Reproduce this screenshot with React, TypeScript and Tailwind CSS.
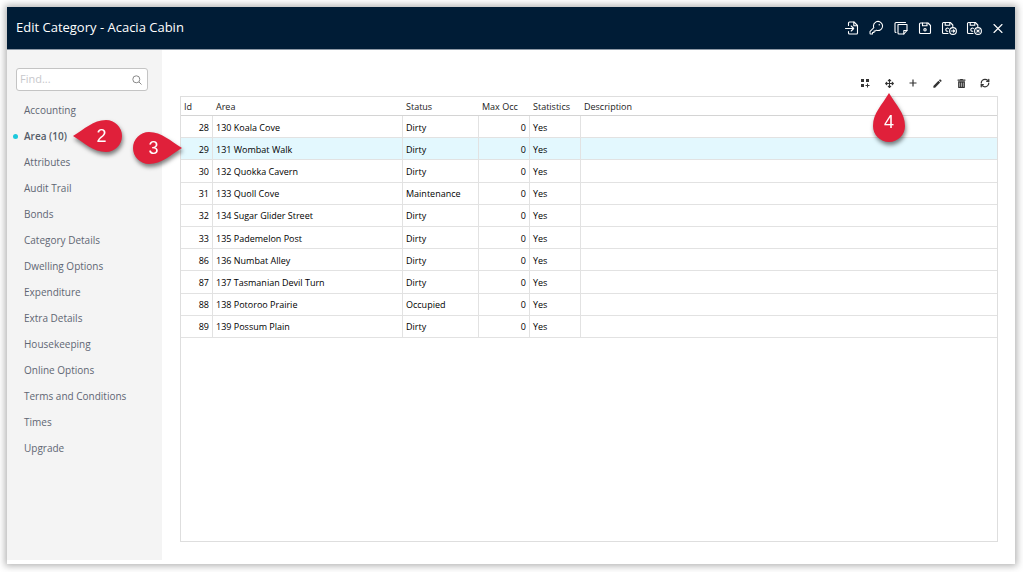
import type { ReactNode } from 'react'
import { FaArrowsAlt, FaTrashAlt } from 'react-icons/fa'
import { LuRefreshCw } from 'react-icons/lu'
import { MdEdit } from 'react-icons/md'
import { PiKey } from 'react-icons/pi'

type Area = {
  id: number
  name: string
  status: string
  maxOcc: number
  statistics: string
  description: string
}

const sections = [
  'Accounting',
  'Area (10)',
  'Attributes',
  'Audit Trail',
  'Bonds',
  'Category Details',
  'Dwelling Options',
  'Expenditure',
  'Extra Details',
  'Housekeeping',
  'Online Options',
  'Terms and Conditions',
  'Times',
  'Upgrade',
]
const activeSection = 'Area (10)'

const area = (id: number, name: string, status = 'Dirty'): Area => ({
  id,
  name,
  status,
  maxOcc: 0,
  statistics: 'Yes',
  description: '',
})

const areas = [
  area(28, '130 Koala Cove'),
  area(29, '131 Wombat Walk'),
  area(30, '132 Quokka Cavern'),
  area(31, '133 Quoll Cove', 'Maintenance'),
  area(32, '134 Sugar Glider Street'),
  area(33, '135 Pademelon Post'),
  area(86, '136 Numbat Alley'),
  area(87, '137 Tasmanian Devil Turn'),
  area(88, '138 Potoroo Prairie', 'Occupied'),
  area(89, '139 Possum Plain'),
]
const selectedId = 29

function Line({ children }: { children: ReactNode }) {
  return (
    <svg
      viewBox="0 0 16 16"
      className="size-4"
      fill="none"
      stroke="currentColor"
      strokeWidth="1.1"
      strokeLinecap="round"
      strokeLinejoin="round"
    >
      {children}
    </svg>
  )
}

const FileInIcon = () => (
  <Line>
    <path d="M4.5 5.5V3a1 1 0 0 1 1-1H10l3.5 3.5V13a1 1 0 0 1-1 1h-7a1 1 0 0 1-1-1v-1.5" />
    <path d="M9.8 2v3.7h3.7M1.5 8.5h8M7.2 6l2.5 2.5L7.2 11" />
  </Line>
)

const CopyIcon = () => (
  <Line>
    <path d="M5 4.500h9v6L10.800 14H6a1 1 0 0 1-1-1z" />
    <path d="M14 10.500h-3.200V14M3 12.500a1 1 0 0 1-1-1V3.500a1 1 0 0 1 1-1h9.500" />
  </Line>
)

const SaveIcon = () => (
  <Line>
    <path d="M3.5 3h7.5l2.5 2.5v7a1 1 0 0 1-1 1h-9a1 1 0 0 1-1-1V4a1 1 0 0 1 1-1z" />
    <path d="M5.5 3v2.8h4.5V3" />
    <circle cx="8" cy="9.8" r="1.2" />
  </Line>
)

const SaveBadge = ({ children }: { children: ReactNode }) => (
  <Line>
    <path d="M7 13.5H2.5a1 1 0 0 1-1-1V3.500a1 1 0 0 1 1-1h6.800l2.500 2.500v1.800" />
    <path d="M4.200 2.500v2.800h4.600V2.500M7.400 8.400a1.600 1.600 0 1 0-.6 2.800" />
    <circle cx="12" cy="11" r="3.400" />
    {children}
  </Line>
)

const headerActions = [
  { label: 'Check in', icon: <FileInIcon /> },
  { label: 'Security', icon: <PiKey className="size-4" /> },
  { label: 'Copy', icon: <CopyIcon /> },
  { label: 'Save', icon: <SaveIcon /> },
  { label: 'Save and next', icon: <SaveBadge><path d="M10.200 11h3.400M12.400 9.800l1.300 1.200-1.300 1.200" /></SaveBadge> },
  { label: 'Save and close', icon: <SaveBadge><path d="m10.800 9.800 2.400 2.400m0-2.400-2.400 2.400" /></SaveBadge> },
  { label: 'Close', icon: <Line><path d="m4 4.500 8 8m0-8-8 8" /></Line> },
]

const toolbarActions = [
  {
    label: 'Add multiple',
    icon: (
      <svg viewBox="0 0 10 10" className="size-[10px]" fill="currentColor">
        <path d="M1 1h3v3H1zM6 1h3v3H6zM1 6h3v3H1zM7 5.500h1V7h1.500v1H8v1.500H7V8H5.500V7H7z" />
      </svg>
    ),
  },
  { label: 'Move', icon: <FaArrowsAlt className="size-[9px]" /> },
  {
    label: 'Add',
    icon: (
      <svg viewBox="0 0 10 10" className="size-[10px]" stroke="currentColor" strokeWidth="1.2">
        <path d="M5 1.500v7M1.500 5h7" />
      </svg>
    ),
  },
  { label: 'Edit', icon: <MdEdit className="size-[11px]" /> },
  { label: 'Delete', icon: <FaTrashAlt className="size-[9px]" /> },
  { label: 'Refresh', icon: <LuRefreshCw className="size-[10px]" strokeWidth={3} /> },
]

const pins = {
  left: {
    box: 'h-8 w-[49px] pl-2',
    view: '0 0 49 32',
    path: 'M0 16C12 9 20 0 33 0a16 16 0 0 1 0 32C20 32 12 23 0 16z',
  },
  right: {
    box: 'h-8 w-[49px] pr-2',
    view: '0 0 49 32',
    path: 'M49 16C37 9 29 0 16 0a16 16 0 0 0 0 32C29 32 37 23 49 16z',
  },
  up: {
    box: 'h-[49px] w-8 pt-2',
    view: '0 0 32 49',
    path: 'M16 0C9 12 0 20 0 33a16 16 0 0 0 32 0C32 20 23 12 16 0z',
  },
}

function Pin({ step, point, className }: { step: number; point: keyof typeof pins; className: string }) {
  const pin = pins[point]
  return (
    <span className={`pointer-events-none absolute z-10 ${className}`}>
      <span
        className={`relative flex items-center justify-center drop-shadow-[1px_3px_2px_rgba(0,0,0,0.5)] ${pin.box}`}
      >
        <svg viewBox={pin.view} className="absolute inset-0 size-full" fill="#e0203a">
          <path d={pin.path} />
        </svg>
        <span className="relative font-['Liberation_Sans',sans-serif] text-lg leading-none font-normal text-white">
          {step}
        </span>
      </span>
    </span>
  )
}

export default function App() {
  return (
    <div className="flex min-h-screen bg-white p-2 pt-[7px] pl-[7px] font-['Open_Sans',sans-serif]">
      <div className="flex flex-1 flex-col bg-white shadow-[0_0_7px_2px_rgba(0,0,0,0.3)]">
        <header className="flex h-[43px] items-center justify-between border-b border-[#8e99a6] bg-[#001c36] pr-[5px] pl-[9px] text-white">
          <h1 className="pb-0.5 text-[13px] leading-5">Edit Category - Acacia Cabin</h1>
          <div className="flex w-[170px] justify-between">
            {headerActions.map((action) => (
              <button key={action.label} aria-label={action.label} className="flex size-6 items-center justify-center">
                {action.icon}
              </button>
            ))}
          </div>
        </header>

        <div className="flex flex-1">
          {/* Sections */}
          <aside className="mb-1 w-[155px] shrink-0 bg-[#f4f4f4] pt-[18px]">
            <label className="mr-[14px] ml-[9px] flex h-[23px] items-center rounded-[3px] border border-[#c4c4c4] bg-white px-[3px]">
              <input
                type="text"
                aria-label="Find"
                placeholder="Find..."
                className="w-full min-w-0 text-[11px] outline-none placeholder:text-[#c8c8cc]"
              />
              <svg viewBox="0 0 10 10" className="mr-0.5 size-[10px] shrink-0" fill="none" stroke="#888">
                <circle cx="4.300" cy="4.300" r="3.500" />
                <path d="m7 7 2.500 2.500" />
              </svg>
            </label>
            <nav className="mt-[6px]">
              {sections.map((section) => {
                const active = section === activeSection
                return (
                  <a
                    key={section}
                    href="#"
                    className={`relative flex h-[26px] items-center pl-[17px] text-[10px] ${
                      active ? 'font-semibold text-[#555c68]' : 'text-[#5f6673]'
                    }`}
                  >
                    {active && <span className="absolute left-[6px] size-[5px] rounded-full bg-[#1cc8dc]" />}
                    {section}
                    {active && <Pin step={2} point="left" className="left-[66px]" />}
                  </a>
                )
              })}
            </nav>
          </aside>

          {/* Areas */}
          <main className="flex flex-1 flex-col pt-5 pr-[17px] pb-[22px] pl-[18px]">
            <div className="flex h-[26px] items-center justify-end pr-px text-[#333]">
              {toolbarActions.map((action) => (
                <button
                  key={action.label}
                  aria-label={action.label}
                  className="relative flex size-6 items-center justify-center"
                >
                  {action.icon}
                  {action.label === 'Move' && <Pin step={4} point="up" className="top-[22px]" />}
                </button>
              ))}
            </div>

            <div className="flex-1 border border-[#dedede]">
              <table className="h-[241px] w-full table-fixed border-separate border-spacing-0 text-[9px] leading-3 text-black">
                <colgroup>
                  <col className="w-8" />
                  <col className="w-[190px]" />
                  <col className="w-[76px]" />
                  <col className="w-[51px]" />
                  <col className="w-[51px]" />
                  <col />
                </colgroup>
                <thead>
                  <tr className="h-[19px] text-left text-[#222] *:border-b *:border-[#d4d4d4] *:px-[3px] *:pt-0.5 *:font-medium">
                    <th>Id</th>
                    <th>Area</th>
                    <th>Status</th>
                    <th>Max Occ</th>
                    <th>Statistics</th>
                    <th>Description</th>
                  </tr>
                </thead>
                <tbody>
                  {areas.map((row) => (
                    <tr
                      key={row.id}
                      className={`*:border-r *:border-b *:border-[#e2e2e2] *:px-[3px] *:pt-0.5 *:last:border-r-0 ${
                        row.id === selectedId ? 'bg-[#e3f8fe]' : ''
                      }`}
                    >
                      <td className="relative text-right">
                        {row.id}
                        {row.id === selectedId && <Pin step={3} point="right" className="top-[-6px] right-[30px]" />}
                      </td>
                      <td>{row.name}</td>
                      <td>{row.status}</td>
                      <td className="text-right">{row.maxOcc}</td>
                      <td>{row.statistics}</td>
                      <td>{row.description}</td>
                    </tr>
                  ))}
                </tbody>
              </table>
            </div>
          </main>
        </div>
      </div>
    </div>
  )
}
